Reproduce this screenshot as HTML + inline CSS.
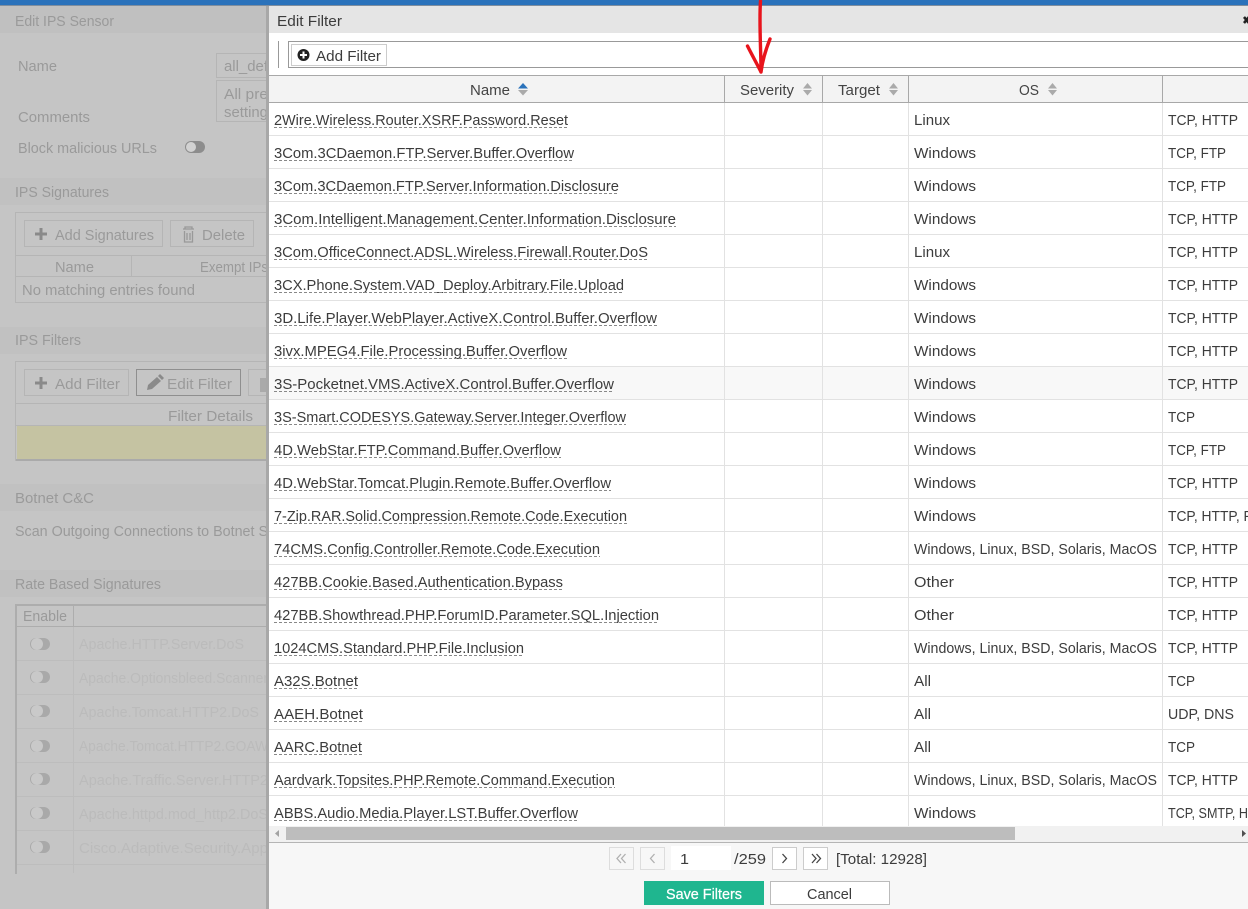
<!DOCTYPE html>
<html><head><meta charset="utf-8"><title>Edit Filter</title>
<style>
html,body{margin:0;padding:0;background:#c5c5c5;width:1248px;height:909px;overflow:hidden}
svg{display:block}
text{font-family:"Liberation Sans",sans-serif;font-size:14.5px;fill:#3c3c3c;transform:translateY(1px)}
.l text{fill:#9a9a9a}
.f text{fill:#bbb;transform:none}
.d{stroke:#888;stroke-width:1;stroke-dasharray:3 2;fill:none}
.r{stroke:#e2e2e2;stroke-width:1}
.h text{fill:#444}
</style></head><body>
<svg width="1248" height="909" viewBox="0 0 1248 909" xmlns="http://www.w3.org/2000/svg">
<rect width="1248" height="909" fill="#c5c5c5"/>
<!-- left panel -->
<rect y="6" width="268" height="27" fill="#c0c0c0"/>
<rect y="178" width="268" height="27" fill="#c1c1c1"/>
<rect y="327" width="268" height="27" fill="#c1c1c1"/>
<rect y="484" width="268" height="27" fill="#c1c1c1"/>
<rect y="570" width="268" height="27" fill="#c1c1c1"/>
<g class="l">
<text x="15" y="25" textLength="99" lengthAdjust="spacingAndGlyphs">Edit IPS Sensor</text>
<text x="18" y="70" textLength="39" lengthAdjust="spacingAndGlyphs">Name</text>
<text x="18" y="121" textLength="72" lengthAdjust="spacingAndGlyphs">Comments</text>
<text x="18" y="152" textLength="139" lengthAdjust="spacingAndGlyphs">Block malicious URLs</text>
<text x="15" y="196" textLength="94" lengthAdjust="spacingAndGlyphs">IPS Signatures</text>
<text x="15" y="344" textLength="66" lengthAdjust="spacingAndGlyphs">IPS Filters</text>
<text x="15" y="502" textLength="79" lengthAdjust="spacingAndGlyphs">Botnet C&amp;C</text>
<text x="15" y="535" textLength="253" lengthAdjust="spacingAndGlyphs">Scan Outgoing Connections to Botnet S</text>
<text x="15" y="588" textLength="146" lengthAdjust="spacingAndGlyphs">Rate Based Signatures</text>
<text x="224" y="70" textLength="44" lengthAdjust="spacingAndGlyphs">all_def</text>
<text x="224" y="98" textLength="44" lengthAdjust="spacingAndGlyphs">All pre</text>
<text x="224" y="116" textLength="44" lengthAdjust="spacingAndGlyphs">setting</text>
<text x="55" y="239" textLength="99" lengthAdjust="spacingAndGlyphs">Add Signatures</text>
<text x="202" y="239" textLength="43" lengthAdjust="spacingAndGlyphs">Delete</text>
<text x="55" y="271" textLength="39" lengthAdjust="spacingAndGlyphs">Name</text>
<text x="200" y="271" textLength="68" lengthAdjust="spacingAndGlyphs">Exempt IPs</text>
<text x="22" y="294" textLength="173" lengthAdjust="spacingAndGlyphs">No matching entries found</text>
<text x="55" y="388" textLength="65" lengthAdjust="spacingAndGlyphs">Add Filter</text>
<text x="167" y="388" textLength="65" lengthAdjust="spacingAndGlyphs">Edit Filter</text>
<text x="168" y="420" textLength="85" lengthAdjust="spacingAndGlyphs">Filter Details</text>
<text x="23" y="620" textLength="44" lengthAdjust="spacingAndGlyphs">Enable</text>
</g>
<g fill="none" stroke="#b5b5b5">
<rect x="216.500" y="53.500" width="60" height="24"/>
<rect x="216.500" y="80.500" width="60" height="41"/>
<rect x="15.500" y="212.500" width="260" height="90"/>
<rect x="24.500" y="220.500" width="138" height="26"/>
<rect x="170.500" y="220.500" width="83" height="26"/>
<path d="M16 255.500H268M16 276.500H268M131.500 256V276"/>
<rect x="15.500" y="361.500" width="260" height="99"/>
<rect x="24.500" y="369.500" width="104" height="26"/>
<rect x="248.500" y="369.500" width="30" height="26"/>
<path d="M16 403.500H268M16 425.500H268"/>
</g>
<rect x="136.500" y="369.500" width="104" height="26" fill="none" stroke="#8f8f8f"/>
<rect x="17" y="426" width="251" height="33" fill="#c5c3a2"/>
<rect x="16" y="459" width="252" height="2" fill="#aaa"/>
<!-- icons left -->
<path d="M41 228V240M35 234H47" stroke="#8a8a8a" stroke-width="3"/>
<path d="M41 377V389M35 383H47" stroke="#8a8a8a" stroke-width="3"/>
<path d="M147 390l1-5 9-8 4 4-9 8zM158 376l2-2 4 4-2 2z" fill="#8a8a8a"/>
<path d="M183 229H194M185 229V227H192V229M184.500 231V242H192.500V231M187 233V240M190 233V240" fill="none" stroke="#999" stroke-width="1.300"/>
<path d="M260 378V392H268V378z" fill="#aaa"/>
<!-- toggles -->
<rect x="185" y="141" width="20" height="12" rx="6" fill="#8d8d8d"/><circle cx="191" cy="147" r="5" fill="#d2d2d2"/>
<!-- rate table -->
<rect x="15" y="604" width="253" height="2" fill="#adadad"/>
<rect x="15" y="604" width="2" height="270" fill="#adadad"/>
<path d="M17 626.500H268M73.500 606V626" stroke="#adadad" fill="none"/>
<path d="M73.500 627V873M17 660.500H268M17 694.500H268M17 728.500H268M17 762.500H268M17 796.500H268M17 830.500H268M17 864.500H268" stroke="#bdbdbd" fill="none"/>
<g fill="#a9a9a9">
<rect x="30" y="638" width="20" height="12" rx="6"/><rect x="30" y="671" width="20" height="12" rx="6"/><rect x="30" y="705" width="20" height="12" rx="6"/><rect x="30" y="740" width="20" height="12" rx="6"/><rect x="30" y="773" width="20" height="12" rx="6"/><rect x="30" y="807" width="20" height="12" rx="6"/><rect x="30" y="841" width="20" height="12" rx="6"/>
</g>
<g fill="#c9c9c9">
<circle cx="37" cy="644" r="6"/><circle cx="37" cy="677" r="6"/><circle cx="37" cy="711" r="6"/><circle cx="37" cy="746" r="6"/><circle cx="37" cy="779" r="6"/><circle cx="37" cy="813" r="6"/><circle cx="37" cy="847" r="6"/>
</g>
<g class="f">
<text x="79" y="649" textLength="165" lengthAdjust="spacingAndGlyphs">Apache.HTTP.Server.DoS</text>
<text x="79" y="683" textLength="189" lengthAdjust="spacingAndGlyphs">Apache.Optionsbleed.Scanner</text>
<text x="79" y="717" textLength="180" lengthAdjust="spacingAndGlyphs">Apache.Tomcat.HTTP2.DoS</text>
<text x="79" y="751" textLength="189" lengthAdjust="spacingAndGlyphs">Apache.Tomcat.HTTP2.GOAW</text>
<text x="79" y="785" textLength="189" lengthAdjust="spacingAndGlyphs">Apache.Traffic.Server.HTTP2</text>
<text x="79" y="819" textLength="189" lengthAdjust="spacingAndGlyphs">Apache.httpd.mod_http2.DoS</text>
<text x="79" y="853" textLength="189" lengthAdjust="spacingAndGlyphs">Cisco.Adaptive.Security.App</text>
</g>
<!-- modal -->
<rect x="266" y="6" width="3" height="903" fill="#a8a8a8"/>
<rect x="269" y="6" width="979" height="903" fill="#f7f7f7"/>
<rect width="1248" height="5" fill="#2a72bb"/>
<rect y="5" width="1248" height="1" fill="#7f8e9e"/>
<rect x="269" y="6" width="979" height="27" fill="#e5e5e5"/>
<text x="277" y="25" textLength="65" lengthAdjust="spacingAndGlyphs">Edit Filter</text>
<path d="M1244 17L1249 23M1249 17L1244 23" stroke="#222" stroke-width="2.600"/>
<rect x="269" y="33" width="979" height="43" fill="#fff"/>
<path d="M278.500 41V68" stroke="#999"/>
<path d="M1248 41.500H288.500V67.500H1248" fill="#fff" stroke="#999"/>
<rect x="291.500" y="44.500" width="95" height="21" fill="#fff" stroke="#ccc"/>
<circle cx="303.500" cy="55" r="6" fill="#222"/>
<path d="M303.500 51.500V58.500M300 55H307" stroke="#fff" stroke-width="2"/>
<text x="316" y="60" textLength="65" lengthAdjust="spacingAndGlyphs">Add Filter</text>
<!-- table header -->
<rect x="269" y="76" width="979" height="27" fill="#f3f3f3"/>
<path d="M269 75.500H1248M269 102.500H1248" stroke="#a8a8a8"/>
<path d="M724.500 76V102M822.500 76V102M908.500 76V102M1162.500 76V102" stroke="#a8a8a8"/>
<g class="h">
<text x="470" y="94" textLength="40" lengthAdjust="spacingAndGlyphs">Name</text>
<text x="740" y="94" textLength="54" lengthAdjust="spacingAndGlyphs">Severity</text>
<text x="838" y="94" textLength="42" lengthAdjust="spacingAndGlyphs">Target</text>
<text x="1019" y="94" textLength="20" lengthAdjust="spacingAndGlyphs">OS</text>
</g>
<path d="M518 88.500L523 83L528 88.500z" fill="#2a72bb"/><path d="M518 90L523 95.500L528 90z" fill="#aaa"/>
<path d="M803 88.500L807.500 83L812 88.500zM803 90L807.500 95.500L812 90zM889 88.500L893.500 83L898 88.500zM889 90L893.500 95.500L898 90zM1048 88.500L1052.500 83L1057 88.500zM1048 90L1052.500 95.500L1057 90z" fill="#aaa"/>
<!-- rows -->
<rect x="269" y="103" width="979" height="723" fill="#fff"/>
<rect x="269" y="367" width="979" height="33" fill="#f8f8f8"/>
<path class="r" d="M269 135.500H1248M269 168.500H1248M269 201.500H1248M269 234.500H1248M269 267.500H1248M269 300.500H1248M269 333.500H1248M269 366.500H1248M269 399.500H1248M269 432.500H1248M269 465.500H1248M269 498.500H1248M269 531.500H1248M269 564.500H1248M269 597.500H1248M269 630.500H1248M269 663.500H1248M269 696.500H1248M269 729.500H1248M269 762.500H1248M269 795.500H1248"/>
<path class="r" d="M724.500 103V826M822.500 103V826M908.500 103V826M1162.500 103V826"/>
<g>
<text x="274" y="124" textLength="294" lengthAdjust="spacingAndGlyphs">2Wire.Wireless.Router.XSRF.Password.Reset</text>
<text x="274" y="157" textLength="300" lengthAdjust="spacingAndGlyphs">3Com.3CDaemon.FTP.Server.Buffer.Overflow</text>
<text x="274" y="190" textLength="345" lengthAdjust="spacingAndGlyphs">3Com.3CDaemon.FTP.Server.Information.Disclosure</text>
<text x="274" y="223" textLength="402" lengthAdjust="spacingAndGlyphs">3Com.Intelligent.Management.Center.Information.Disclosure</text>
<text x="274" y="256" textLength="374" lengthAdjust="spacingAndGlyphs">3Com.OfficeConnect.ADSL.Wireless.Firewall.Router.DoS</text>
<text x="274" y="289" textLength="350" lengthAdjust="spacingAndGlyphs">3CX.Phone.System.VAD_Deploy.Arbitrary.File.Upload</text>
<text x="274" y="322" textLength="383" lengthAdjust="spacingAndGlyphs">3D.Life.Player.WebPlayer.ActiveX.Control.Buffer.Overflow</text>
<text x="274" y="355" textLength="293" lengthAdjust="spacingAndGlyphs">3ivx.MPEG4.File.Processing.Buffer.Overflow</text>
<text x="274" y="388" textLength="340" lengthAdjust="spacingAndGlyphs">3S-Pocketnet.VMS.ActiveX.Control.Buffer.Overflow</text>
<text x="274" y="421" textLength="352" lengthAdjust="spacingAndGlyphs">3S-Smart.CODESYS.Gateway.Server.Integer.Overflow</text>
<text x="274" y="454" textLength="287" lengthAdjust="spacingAndGlyphs">4D.WebStar.FTP.Command.Buffer.Overflow</text>
<text x="274" y="487" textLength="337" lengthAdjust="spacingAndGlyphs">4D.WebStar.Tomcat.Plugin.Remote.Buffer.Overflow</text>
<text x="274" y="520" textLength="353" lengthAdjust="spacingAndGlyphs">7-Zip.RAR.Solid.Compression.Remote.Code.Execution</text>
<text x="274" y="553" textLength="326" lengthAdjust="spacingAndGlyphs">74CMS.Config.Controller.Remote.Code.Execution</text>
<text x="274" y="586" textLength="289" lengthAdjust="spacingAndGlyphs">427BB.Cookie.Based.Authentication.Bypass</text>
<text x="274" y="619" textLength="385" lengthAdjust="spacingAndGlyphs">427BB.Showthread.PHP.ForumID.Parameter.SQL.Injection</text>
<text x="274" y="652" textLength="250" lengthAdjust="spacingAndGlyphs">1024CMS.Standard.PHP.File.Inclusion</text>
<text x="274" y="685" textLength="84" lengthAdjust="spacingAndGlyphs">A32S.Botnet</text>
<text x="274" y="718" textLength="89" lengthAdjust="spacingAndGlyphs">AAEH.Botnet</text>
<text x="274" y="751" textLength="88" lengthAdjust="spacingAndGlyphs">AARC.Botnet</text>
<text x="274" y="784" textLength="341" lengthAdjust="spacingAndGlyphs">Aardvark.Topsites.PHP.Remote.Command.Execution</text>
<text x="274" y="817" textLength="304" lengthAdjust="spacingAndGlyphs">ABBS.Audio.Media.Player.LST.Buffer.Overflow</text>
</g>
<path class="d" d="M274 127.500H568M274 160.500H574M274 193.500H619M274 226.500H676M274 259.500H648M274 292.500H624M274 325.500H657M274 358.500H567M274 391.500H614M274 424.500H626M274 457.500H561M274 490.500H611M274 523.500H627M274 556.500H600M274 589.500H563M274 622.500H659M274 655.500H524M274 688.500H358M274 721.500H363M274 754.500H362M274 787.500H615M274 820.500H578"/>
<g>
<text x="914" y="124" textLength="36" lengthAdjust="spacingAndGlyphs">Linux</text>
<text x="914" y="157" textLength="62" lengthAdjust="spacingAndGlyphs">Windows</text>
<text x="914" y="190" textLength="62" lengthAdjust="spacingAndGlyphs">Windows</text>
<text x="914" y="223" textLength="62" lengthAdjust="spacingAndGlyphs">Windows</text>
<text x="914" y="256" textLength="36" lengthAdjust="spacingAndGlyphs">Linux</text>
<text x="914" y="289" textLength="62" lengthAdjust="spacingAndGlyphs">Windows</text>
<text x="914" y="322" textLength="62" lengthAdjust="spacingAndGlyphs">Windows</text>
<text x="914" y="355" textLength="62" lengthAdjust="spacingAndGlyphs">Windows</text>
<text x="914" y="388" textLength="62" lengthAdjust="spacingAndGlyphs">Windows</text>
<text x="914" y="421" textLength="62" lengthAdjust="spacingAndGlyphs">Windows</text>
<text x="914" y="454" textLength="62" lengthAdjust="spacingAndGlyphs">Windows</text>
<text x="914" y="487" textLength="62" lengthAdjust="spacingAndGlyphs">Windows</text>
<text x="914" y="520" textLength="62" lengthAdjust="spacingAndGlyphs">Windows</text>
<text x="914" y="553" textLength="243" lengthAdjust="spacingAndGlyphs">Windows, Linux, BSD, Solaris, MacOS</text>
<text x="914" y="586" textLength="40" lengthAdjust="spacingAndGlyphs">Other</text>
<text x="914" y="619" textLength="40" lengthAdjust="spacingAndGlyphs">Other</text>
<text x="914" y="652" textLength="243" lengthAdjust="spacingAndGlyphs">Windows, Linux, BSD, Solaris, MacOS</text>
<text x="914" y="685" textLength="17" lengthAdjust="spacingAndGlyphs">All</text>
<text x="914" y="718" textLength="17" lengthAdjust="spacingAndGlyphs">All</text>
<text x="914" y="751" textLength="17" lengthAdjust="spacingAndGlyphs">All</text>
<text x="914" y="784" textLength="243" lengthAdjust="spacingAndGlyphs">Windows, Linux, BSD, Solaris, MacOS</text>
<text x="914" y="817" textLength="62" lengthAdjust="spacingAndGlyphs">Windows</text>
</g>
<g>
<text x="1168" y="124" textLength="70" lengthAdjust="spacingAndGlyphs">TCP, HTTP</text>
<text x="1168" y="157" textLength="58" lengthAdjust="spacingAndGlyphs">TCP, FTP</text>
<text x="1168" y="190" textLength="58" lengthAdjust="spacingAndGlyphs">TCP, FTP</text>
<text x="1168" y="223" textLength="70" lengthAdjust="spacingAndGlyphs">TCP, HTTP</text>
<text x="1168" y="256" textLength="70" lengthAdjust="spacingAndGlyphs">TCP, HTTP</text>
<text x="1168" y="289" textLength="70" lengthAdjust="spacingAndGlyphs">TCP, HTTP</text>
<text x="1168" y="322" textLength="70" lengthAdjust="spacingAndGlyphs">TCP, HTTP</text>
<text x="1168" y="355" textLength="70" lengthAdjust="spacingAndGlyphs">TCP, HTTP</text>
<text x="1168" y="388" textLength="70" lengthAdjust="spacingAndGlyphs">TCP, HTTP</text>
<text x="1168" y="421" textLength="27" lengthAdjust="spacingAndGlyphs">TCP</text>
<text x="1168" y="454" textLength="58" lengthAdjust="spacingAndGlyphs">TCP, FTP</text>
<text x="1168" y="487" textLength="70" lengthAdjust="spacingAndGlyphs">TCP, HTTP</text>
<text x="1168" y="520" textLength="84" lengthAdjust="spacingAndGlyphs">TCP, HTTP, F</text>
<text x="1168" y="553" textLength="70" lengthAdjust="spacingAndGlyphs">TCP, HTTP</text>
<text x="1168" y="586" textLength="70" lengthAdjust="spacingAndGlyphs">TCP, HTTP</text>
<text x="1168" y="619" textLength="70" lengthAdjust="spacingAndGlyphs">TCP, HTTP</text>
<text x="1168" y="652" textLength="70" lengthAdjust="spacingAndGlyphs">TCP, HTTP</text>
<text x="1168" y="685" textLength="27" lengthAdjust="spacingAndGlyphs">TCP</text>
<text x="1168" y="718" textLength="66" lengthAdjust="spacingAndGlyphs">UDP, DNS</text>
<text x="1168" y="751" textLength="27" lengthAdjust="spacingAndGlyphs">TCP</text>
<text x="1168" y="784" textLength="70" lengthAdjust="spacingAndGlyphs">TCP, HTTP</text>
<text x="1168" y="817" textLength="80" lengthAdjust="spacingAndGlyphs">TCP, SMTP, H</text>
</g>
<!-- scrollbar -->
<rect x="269" y="826" width="979" height="16" fill="#f1f1f1"/>
<rect x="286" y="827" width="729" height="13" fill="#bdbdbd"/>
<path d="M279 830V837L275 833.500z" fill="#a3a3a3"/>
<path d="M1242 830V837L1246 833.500z" fill="#505050"/>
<path d="M269 842.500H1248" stroke="#b5b5b5"/>
<!-- pager -->
<rect x="609.500" y="847.500" width="24" height="22" fill="#f7f7f7" stroke="#ddd"/>
<rect x="640.500" y="847.500" width="24" height="22" fill="#f7f7f7" stroke="#ddd"/>
<rect x="671" y="846" width="60" height="24" fill="#fff"/>
<rect x="772.500" y="847.500" width="24" height="22" fill="#fff" stroke="#ccc"/>
<rect x="803.500" y="847.500" width="24" height="22" fill="#fff" stroke="#ccc"/>
<path d="M621 854L617 858.500L621 863M625.500 854L621.500 858.500L625.500 863M654.500 854L650.500 858.500L654.500 863" fill="none" stroke="#b0b0b0" stroke-width="1.300"/>
<path d="M782.500 854L786.500 858.500L782.500 863M812 854L816 858.500L812 863M816.500 854L820.500 858.500L816.500 863" fill="none" stroke="#444" stroke-width="1.300"/>
<text x="680" y="863" textLength="9" lengthAdjust="spacingAndGlyphs">1</text>
<text x="734" y="863" textLength="32" lengthAdjust="spacingAndGlyphs">/259</text>
<text x="836" y="863" textLength="91" lengthAdjust="spacingAndGlyphs">[Total: 12928]</text>
<!-- buttons -->
<rect x="644" y="881" width="120" height="24" fill="#1fb68f"/>
<text x="666" y="898" textLength="76" lengthAdjust="spacingAndGlyphs" style="fill:#fff;stroke:#fff;stroke-width:.25px">Save Filters</text>
<rect x="770.500" y="881.500" width="119" height="23" fill="#fff" stroke="#bbb"/>
<text x="807" y="898" textLength="45" lengthAdjust="spacingAndGlyphs">Cancel</text>
<!-- red arrow -->
<path d="M760.500 1C759 22 761 50 761 72M747.500 46C752 55 757 64 761 72C762.500 60 766 49 770 39" fill="none" stroke="#e8141c" stroke-width="3.400" stroke-linecap="round" stroke-linejoin="round"/>
</svg>
</body></html>
